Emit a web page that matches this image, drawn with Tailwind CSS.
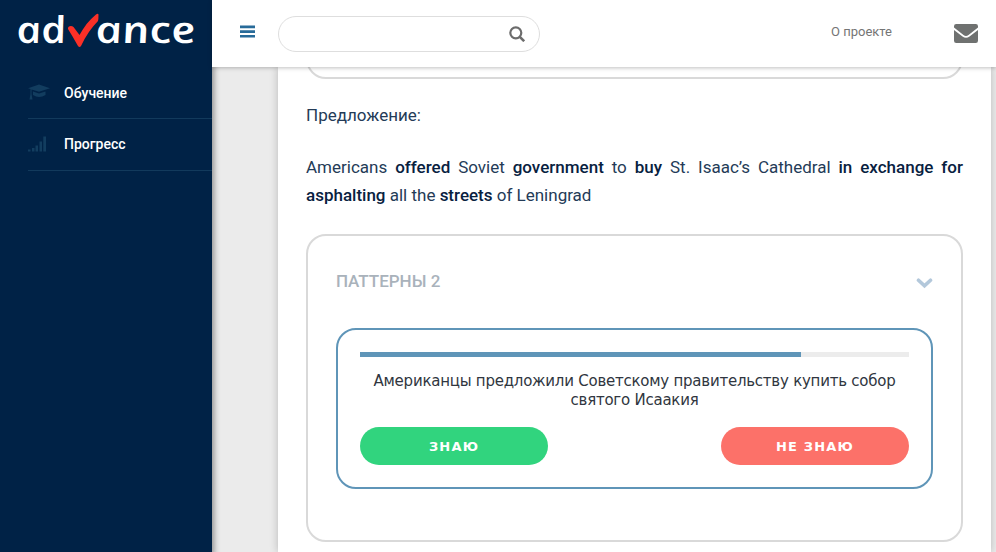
<!DOCTYPE html>
<html lang="ru">
<head>
<meta charset="utf-8">
<title>Advance</title>
<script src="https://cdn.jsdelivr.net/npm/@tailwindcss/browser@4"></script>
</head>
<body class="flex h-[552px] w-[996px] overflow-hidden bg-[#ebebeb] font-[Roboto,sans-serif]">
  <aside class="relative z-10 flex w-[212px] shrink-0 flex-col bg-[#002246] shadow-[2px_4px_6px_rgba(0,0,0,0.4)]">
    <div class="h-[67px]">
      <svg class="block h-[67px] w-[212px]" viewBox="0 0 212 67">
        <g class="fill-white font-['Open_Sans',sans-serif] text-[37px] font-semibold italic">
          <text transform="translate(18.500 43) skewX(12)" textLength="50" lengthAdjust="spacingAndGlyphs">ad</text>
          <text transform="translate(97.500 43) skewX(12)" textLength="100" lengthAdjust="spacingAndGlyphs">ance</text>
        </g>
        <path d="M68 29C67.500 26.500 71 25 73.500 27L79.500 35C84 27 89 20 96 14.500Q98.500 13 98.500 15Q98.500 19 98 21Q88 31 81 46Q79.500 48 78 46Q73 37 68 29Z" fill="#fb3027"/>
      </svg>
    </div>
    <nav class="ml-7 text-[14px] font-medium text-white">
      <a class="flex h-[52px] items-center border-b border-[#123a5c]">
        <svg class="-mt-0.5 h-4 w-[22px]" viewBox="0 0 22 16" fill="#123d5f"><path d="M0 4.200L11 0.500L22 4.200L11 7.800L3.500 5.500V10L4.500 15.500H1.500L2.500 10V5Z"/><path d="M5 7.500L11 9.500L17.500 7.500V11Q11 15 5 11Z"/></svg>
        <span class="ml-[14px] pt-px">Обучение</span>
      </a>
      <a class="flex h-[52px] items-center border-b border-[#123a5c]">
        <svg class="-mt-0.5 h-4 w-[22px]" viewBox="0 0 22 16" fill="#123d5f"><path d="M0 13.500h2.500V15.500H0zM4 12h2.500v3.500H4zM7.500 9.500H10v6H7.500zM11.500 5.500H14v10h-2.500zM15.300 .5H18v15h-2.700z"/></svg>
        <span class="ml-[14px]">Прогресс</span>
      </a>
    </nav>
  </aside>

  <div class="flex min-w-0 flex-1 flex-col">
    <header class="relative z-20 flex h-[67px] shrink-0 items-center bg-white shadow-[0_1px_4px_rgba(0,0,0,0.25)]">
      <svg class="mb-1 ml-7 h-[13px] w-[15px] shrink-0" viewBox="0 0 15 13" fill="#286b99"><path d="M0 .5h15v2.700H0zM0 5.200h15v2.700H0zM0 9.900h15v2.700H0z"/></svg>
      <div class="ml-[23px] flex h-9 w-[262px] items-center justify-end rounded-full border border-[#dedede] pr-[14px]">
        <svg class="h-4 w-4" viewBox="0 0 16 16" fill="none" stroke="#6c6c6c" stroke-width="2.200"><circle cx="6.800" cy="6.800" r="5.500"/><path d="M10.800 10.800L15.200 15.200" stroke-width="2.600"/></svg>
      </div>
      <a class="mb-[3px] ml-[291px] text-[13px] text-[#757575]">О проекте</a>
      <svg class="ml-auto mr-[18px] h-[19px] w-6" viewBox="0 0 24 19" fill="#6f7170"><path d="M2.200 0H21.800Q24 0 24 2.200V3.600L14.500 11Q12 13 9.500 11L0 3.600V2.200Q0 0 2.200 0Z"/><path d="M0 6L8.500 12.500Q12 15 15.500 12.500L24 6V16.800Q24 19 21.800 19H2.200Q0 19 0 16.800Z"/></svg>
    </header>

    <main class="ml-[66px] mr-[5px] flex-1 bg-white px-7 text-[17px] text-[#243b57] shadow-[0_0_8px_rgba(0,0,0,0.22)]">
      <div class="h-3 overflow-hidden"><div class="-mt-10 h-[52px] rounded-[20px] border-2 border-[#d9d9d9]"></div></div>
      <p class="mt-[22px] leading-7">Предложение:</p>
      <p class="mt-6 text-justify leading-7">Americans <b class="font-medium text-[#08213f]">offered</b> Soviet <b class="font-medium text-[#08213f]">government</b> to <b class="font-medium text-[#08213f]">buy</b> St. Isaac’s Cathedral <b class="font-medium text-[#08213f]">in exchange for</b> <b class="font-medium text-[#08213f]">asphalting</b> all the <b class="font-medium text-[#08213f]">streets</b> of Leningrad</p>

      <section class="mt-[25px] h-[308px] rounded-[20px] border-2 border-[#d9d9d9] px-7">
        <div class="flex h-[92px] items-center justify-between">
          <h2 class="text-[17px] font-medium text-[#a9b2bb]">ПАТТЕРНЫ 2</h2>
          <svg class="mt-0.5 h-[11px] w-[17px]" viewBox="0 0 17 11" fill="none" stroke="#b3c8db" stroke-width="3.600"><path d="M2.500 2.200L8.500 7.800L14.500 2.200" stroke-linecap="round"/></svg>
        </div>
        <div class="h-[161px] rounded-[20px] border-2 border-[#5f95b8] px-[22px] pt-[22px]">
          <div class="h-[5px] bg-[#ececec]"><div class="h-full bg-[#5f95b8]" style="width:80.3%"></div></div>
          <p class="mt-[15px] text-center font-['DejaVu_Sans',sans-serif] text-[15px] leading-[19px] tracking-[-0.24px] text-[#303640]">Американцы предложили Советскому правительству купить собор<br>святого Исаакия</p>
          <div class="mt-[17px] flex justify-between font-['DejaVu_Sans',sans-serif] text-[13px] font-bold tracking-[1.200px] text-white">
            <button class="h-[38px] w-[188px] rounded-full bg-[#31d47e] pt-0.5">ЗНАЮ</button>
            <button class="h-[38px] w-[188px] rounded-full bg-[#fc7169] pt-0.5">НЕ ЗНАЮ</button>
          </div>
        </div>
      </section>
    </main>
  </div>
</body>
</html>
